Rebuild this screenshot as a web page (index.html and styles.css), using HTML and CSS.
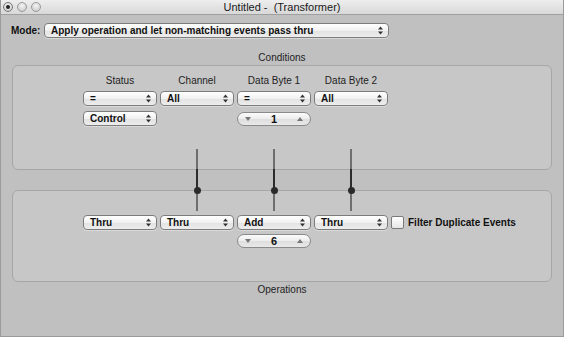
FILE: index.html
```html
<!DOCTYPE html>
<html lang="en">
<head>
<meta charset="UTF-8">
<meta name="viewport" content="width=device-width, initial-scale=1.0">
<title>Untitled - (Transformer)</title>
<link rel="stylesheet" href="styles.css">
</head>
<body>

<div class="window">
  <div class="titlebar">
    <div class="lights">
      <span class="light edited"></span>
      <span class="light"></span>
      <span class="light"></span>
    </div>
    <div class="title">Untitled -&nbsp; (Transformer)</div>
    <div></div>
  </div>

  <div class="mode-row">
    <span class="mode-label">Mode:</span>
    <div class="popup mode-popup">Apply operation and let non-matching events pass thru</div>
  </div>

  <div class="section-label">Conditions</div>

  <div class="panels">
    <div class="box conditions">
      <div class="grid">
        <div class="col-head">Status</div>
        <div class="col-head">Channel</div>
        <div class="col-head">Data Byte 1</div>
        <div class="col-head">Data Byte 2</div>

        <div class="popup">=</div>
        <div class="popup">All</div>
        <div class="popup">=</div>
        <div class="popup">All</div>

        <div class="popup row2">Control</div>
        <div></div>
        <div class="stepper row2"><span class="tri down"></span><span>1</span><span class="tri up"></span></div>
        <div></div>
      </div>
    </div>

    <div class="box operations">
      <div class="grid ops">
        <div class="popup">Thru</div>
        <div class="popup">Thru</div>
        <div class="popup">Add</div>
        <div class="popup">Thru</div>
        <label class="check"><span class="checkbox"></span>Filter Duplicate Events</label>

        <div></div>
        <div></div>
        <div class="stepper"><span class="tri down"></span><span>6</span><span class="tri up"></span></div>
      </div>
    </div>

    <!-- the three sliders sit over both boxes -->
    <div class="sliders">
      <div></div>
      <div class="slider"><span class="knob"></span></div>
      <div class="slider"><span class="knob"></span></div>
      <div class="slider"><span class="knob"></span></div>
    </div>
  </div>

  <div class="section-label">Operations</div>
</div>

</body>
</html>
```

FILE: styles.css
```css
body {
  margin: 0;
  font-family: "Liberation Sans", Arial, sans-serif;
  font-size: 10px;
  color: #111;
  background-color: #c0c0c0;
}

.window {
  width: 564px;
  height: 337px;
  box-sizing: border-box;
  border: 1px solid #9a9a9a;
  border-top: none;
  background-color: #c0c0c0;
}

.titlebar {
  height: 14px;
  border-bottom: 1px solid #a0a0a0;
  background: linear-gradient(#eeeeee, #d8d8d8);
  display: grid;
  grid-template-columns: 1fr auto 1fr;
  align-items: center;
}

.lights {
  display: flex;
  gap: 4px;
  padding-left: 2px;
}

.light {
  width: 10px;
  height: 10px;
  box-sizing: border-box;
  border-radius: 50%;
  border: 1px solid #9a9a9a;
  background: radial-gradient(circle at 50% 35%, #f4f4f4, #c4c4c4);
  display: flex;
  align-items: center;
  justify-content: center;
}

.light.edited {
  border-color: #777;
}

.light.edited::after {
  content: "";
  width: 4px;
  height: 4px;
  border-radius: 50%;
  background-color: #222;
}

.title {
  font-size: 11px;
  color: #1a1a1a;
}

.mode-row {
  display: flex;
  align-items: center;
  margin-top: 8px;
  padding-left: 10px;
  height: 15px;
}

.mode-label {
  font-weight: bold;
  width: 33px;
}

.mode-popup {
  width: 345px;
}

.section-label {
  text-align: center;
  line-height: 14px;
  color: #222;
}

.mode-row + .section-label {
  margin-top: 13px;
}

.panels {
  position: relative;
  margin: 0 11px;
  display: flex;
  flex-direction: column;
  gap: 20px;
}

.box {
  box-sizing: border-box;
  border: 1px solid #a6a6a6;
  border-radius: 6px;
  background-color: #c7c7c7;
  padding-left: 70px;
}

.conditions {
  height: 105px;
  padding-top: 8px;
}

.operations {
  height: 92px;
  padding-top: 24px;
}

.grid {
  display: grid;
  grid-template-columns: repeat(4, 74px);
  grid-auto-rows: auto;
  column-gap: 3px;
  row-gap: 4px;
  align-items: center;
}

.grid.ops {
  grid-template-columns: repeat(4, 74px) auto;
}

.col-head {
  text-align: center;
  line-height: 13px;
  color: #222;
}

.row2 {
  margin-top: 1px;
}

.popup {
  box-sizing: border-box;
  height: 15px;
  line-height: 13px;
  padding-left: 6px;
  border: 1px solid #7c7c7c;
  border-radius: 4px;
  font-weight: bold;
  white-space: nowrap;
  background-color: #efefef;
  background-image:
    url("data:image/svg+xml,%3Csvg xmlns='http://www.w3.org/2000/svg' width='5' height='9' viewBox='0 0 5 9'%3E%3Cpath d='M2.5 0.5L5 3.5H0Z M2.5 8.5L5 5.5H0Z' fill='%23333'/%3E%3C/svg%3E"),
    linear-gradient(#ffffff, #f1f1f1 50%, #e2e2e2 51%, #ededed);
  background-repeat: no-repeat;
  background-position: right 5px center, 0 0;
  box-shadow: 0 1px 0 rgba(255, 255, 255, 0.35);
}

.stepper {
  box-sizing: border-box;
  height: 14px;
  border: 1px solid #8a8a8a;
  border-radius: 7px;
  background: linear-gradient(#fbfbfb, #ececec 50%, #dedede 51%, #e9e9e9);
  display: flex;
  align-items: center;
  justify-content: space-between;
  padding: 0 7px;
  font-weight: bold;
  font-size: 11px;
}

.tri {
  width: 0;
  height: 0;
  border-left: 3.5px solid transparent;
  border-right: 3.5px solid transparent;
}

.tri.down {
  border-top: 4px solid #777;
}

.tri.up {
  border-bottom: 4px solid #777;
}

.check {
  display: flex;
  align-items: center;
  gap: 4px;
  font-weight: bold;
  white-space: nowrap;
}

.checkbox {
  width: 13px;
  height: 13px;
  box-sizing: border-box;
  border: 1px solid #7a7a7a;
  border-radius: 2px;
  background: linear-gradient(#ffffff, #e6e6e6);
}

.sliders {
  position: absolute;
  top: 84px;
  left: 71px;
  display: grid;
  grid-template-columns: repeat(4, 74px);
  column-gap: 3px;
  pointer-events: none;
}

.slider {
  position: relative;
  justify-self: center;
  width: 2px;
  height: 62px;
  background: linear-gradient(#6e6e6e 0, #6e6e6e 20px, #2c2c2c 20px, #2c2c2c 41px, #6e6e6e 41px);
}

.knob {
  position: absolute;
  left: -2.5px;
  top: 38px;
  width: 7px;
  height: 7px;
  border-radius: 50%;
  background-color: #2a2a2a;
}

.panels + .section-label {
  margin-top: 1px;
}
```
